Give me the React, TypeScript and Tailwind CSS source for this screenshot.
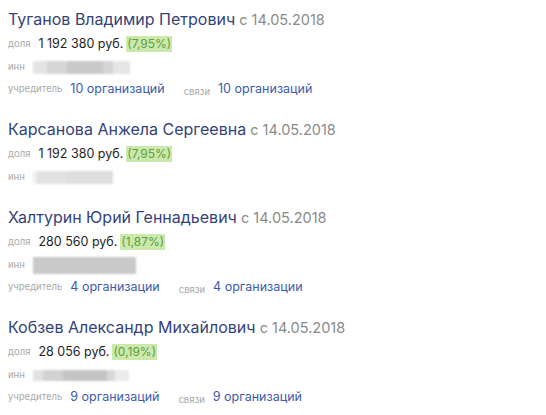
import React from 'react';

type Person = {
  name: string;
  share: string;
  percent: string;
  inn: React.ReactNode;
  founder?: string;
  links?: string;
};

const font = { fontFamily: 'Inter, "Noto Sans", sans-serif' };

const people: Person[] = [
  {
    name: 'Туганов Владимир Петрович',
    share: '1 192 380 руб.',
    percent: '(7,95%)',
    inn: (
      <div className="flex h-[13px] w-[97px]">
        <div className="w-[14px] bg-[#e4e4e4]" />
        <div className="w-[20px] bg-[#d6d6d6]" />
        <div className="w-[36px] bg-[#c9c9c9]" />
        <div className="w-[10px] bg-[#d4d4d4]" />
        <div className="flex-1 bg-[#e6e6e6]" />
      </div>
    ),
    founder: '10 организаций',
    links: '10 организаций',
  },
  {
    name: 'Карсанова Анжела Сергеевна',
    share: '1 192 380 руб.',
    percent: '(7,95%)',
    inn: (
      <div className="flex h-[13px] w-[80px]">
        <div className="w-[4px] bg-[#f0f0f0]" />
        <div className="w-[30px] bg-[#e2e2e2]" />
        <div className="flex-1 bg-[#dedede]" />
      </div>
    ),
  },
  {
    name: 'Халтурин Юрий Геннадьевич',
    share: '280 560 руб.',
    percent: '(1,87%)',
    inn: <div className="h-[17px] w-[103px] bg-[#c9c9c9]" />,
    founder: '4 организации',
    links: '4 организации',
  },
  {
    name: 'Кобзев Александр Михайлович',
    share: '28 056 руб.',
    percent: '(0,19%)',
    inn: (
      <div className="flex h-[11px] w-[96px]">
        <div className="w-[10px] bg-[#e2e2e2]" />
        <div className="w-[20px] bg-[#d2d2d2]" />
        <div className="w-[44px] bg-[#c4c4c4]" />
        <div className="w-[8px] bg-[#d8d8d8]" />
        <div className="flex-1 bg-[#ececec]" />
      </div>
    ),
    founder: '9 организаций',
    links: '9 организаций',
  },
];

function Label({ children }: { children: React.ReactNode }) {
  return <span className="text-[9.5px] text-[#a9a9a9] mr-[8px]">{children}</span>;
}

function PersonBlock({ p }: { p: Person }) {
  return (
    <div className="mb-[20px]">
      <div className="h-[20px] leading-[20px] text-[16px] whitespace-nowrap">
        <span className="text-[#34437a]">{p.name}</span>
        <span className="text-[#8a8a8a] text-[14.5px]"> с 14.05.2018</span>
      </div>
      <div className="mt-[5px] h-[20px] flex items-center whitespace-nowrap">
        <Label>доля</Label>
        <span className="text-[12.5px] text-[#1e1e1e]">{p.share}</span>
        <span className="ml-[3px] text-[12px] leading-[16px] px-[1px] bg-[#cbe8ad] text-[#5f9e3c]">{p.percent}</span>
      </div>
      <div className="mt-[3px] h-[20px] flex items-center">
        <Label>инн</Label>
        <div className="blur-[0.8px]">{p.inn}</div>
      </div>
      {p.founder && (
        <div className="mt-[2px] h-[20px] flex items-center whitespace-nowrap">
          <Label>учредитель</Label>
          <span className="text-[12.5px] text-[#3b5bab]">{p.founder}</span>
          <span className="ml-[19px]"><Label>связи</Label></span>
          <span className="text-[12.5px] text-[#3b5bab]">{p.links}</span>
        </div>
      )}
    </div>
  );
}

export default function App() {
  return (
    <div className="w-[546px] h-[415px] overflow-hidden bg-white pl-[8px] pt-[9px]" style={font}>
      {people.map((p) => (
        <PersonBlock key={p.name} p={p} />
      ))}
    </div>
  );
}
